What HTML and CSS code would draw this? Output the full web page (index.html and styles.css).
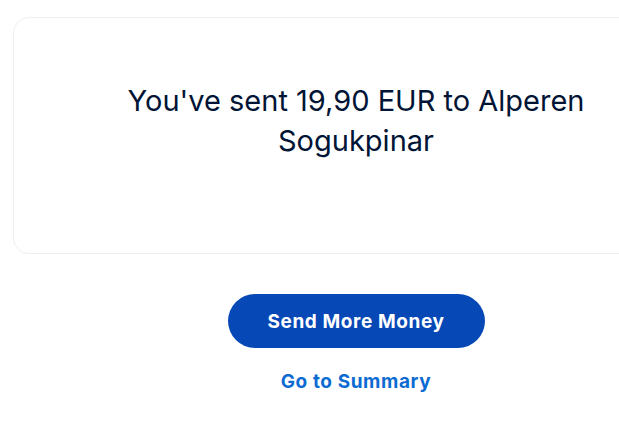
FILE: index.html
```html
<!DOCTYPE html>
<html lang="en">
<head>
<meta charset="utf-8">
<title>Sent</title>
<link rel="stylesheet" href="styles.css">
</head>
<body>
<main class="page">
  <section class="card">
    <h1 class="message">You've sent 19,90 EUR to Alperen Sogukpinar</h1>
  </section>
  <div class="actions">
    <button class="btn-primary" type="button">Send More Money</button>
    <a class="link" href="#">Go to Summary</a>
  </div>
</main>
</body>
</html>
```
FILE: styles.css
```css
html, body {
  margin: 0;
  padding: 0;
  overflow: hidden;
  background: #ffffff;
}
body {
  font-family: Inter, "Noto Sans", sans-serif;
  width: 619px;
  height: 423px;
}
.page {
  margin-left: 13px;
  padding-top: 17px;
  width: 686px;
  display: flex;
  flex-direction: column;
  align-items: center;
}
.card {
  box-sizing: border-box;
  width: 686px;
  height: 237px;
  padding-top: 63px;
  border: 1px solid #efefef;
  border-radius: 16px;
  display: flex;
  align-items: flex-start;
  justify-content: center;
}
.message {
  margin: 0;
  max-width: 480px;
  font-size: 29px;
  font-weight: 400;
  line-height: 40px;
  color: #001435;
  text-align: center;
}
.actions {
  margin-top: 40px;
  display: flex;
  flex-direction: column;
  align-items: center;
  gap: 22px;
}
.btn-primary {
  width: 257px;
  height: 54px;
  border: none;
  border-radius: 27px;
  background: #0548b6;
  color: #ffffff;
  font-family: Inter, "Noto Sans", sans-serif;
  font-size: 19px;
  font-weight: 700;
  letter-spacing: 0.6px;
  cursor: pointer;
}
.link {
  color: #0b6bd3;
  font-size: 19px;
  font-weight: 700;
  letter-spacing: 0.6px;
  text-decoration: none;
}
```
